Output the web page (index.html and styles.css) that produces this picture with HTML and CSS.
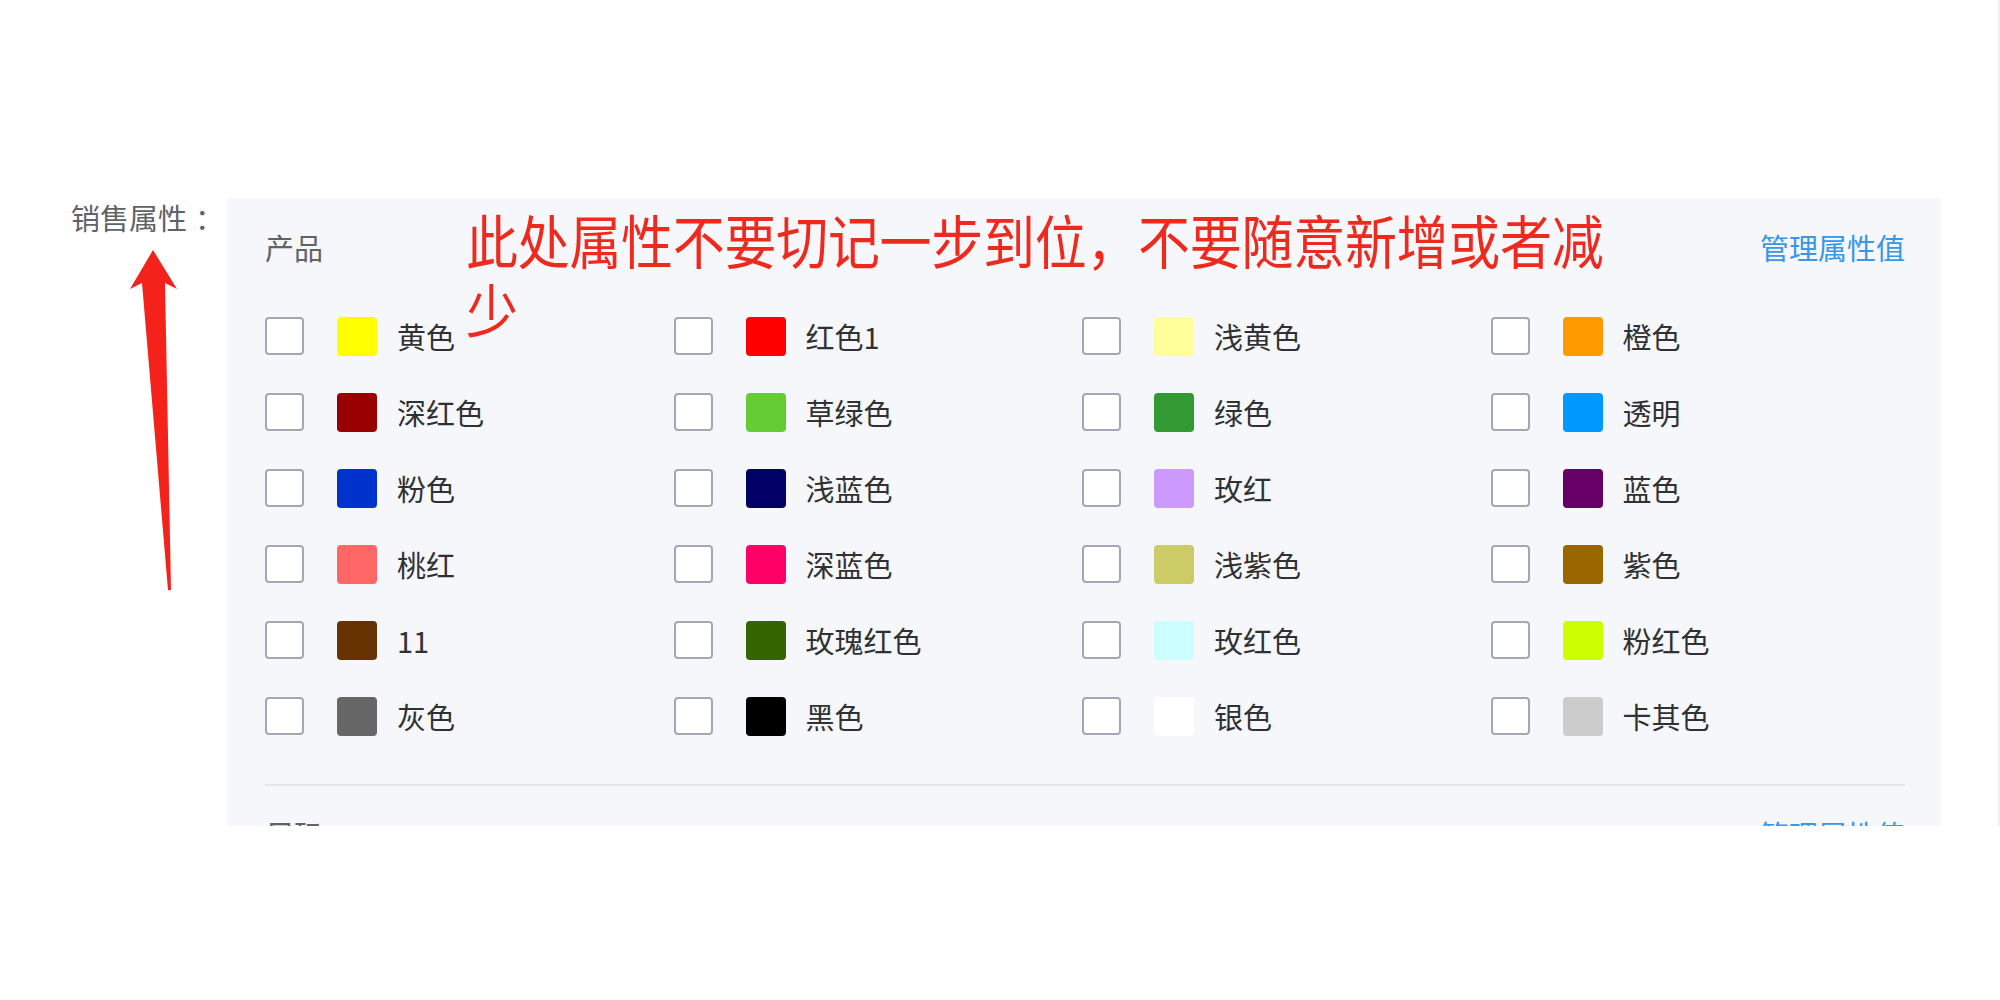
FILE: index.html
```html
<!DOCTYPE html>
<html lang="zh-CN">
<head>
    <meta charset="UTF-8">
    <meta name="viewport" content="width=device-width, initial-scale=1.0">
    <title>销售属性</title>
    <link rel="stylesheet" href="styles.css">
</head>
<body>
    <div class="page">
        <div class="sale-row">
            <div class="sale-label">销售属性<span class="colon">：</span></div>
            <div class="attr-panel">
                <div class="attr-group">
                    <div class="group-head">
                        <span class="group-name">产品</span>
                        <a class="manage-link">管理属性值</a>
                    </div>
                    <div class="value-grid">
                        <label class="value-item"><span class="check"></span><span class="swatch" style="background:#ffff00"></span><span class="value-name">黄色</span></label>
                        <label class="value-item"><span class="check"></span><span class="swatch" style="background:#ff0000"></span><span class="value-name">红色1</span></label>
                        <label class="value-item"><span class="check"></span><span class="swatch" style="background:#ffff99"></span><span class="value-name">浅黄色</span></label>
                        <label class="value-item"><span class="check"></span><span class="swatch" style="background:#ff9900"></span><span class="value-name">橙色</span></label>

                        <label class="value-item"><span class="check"></span><span class="swatch" style="background:#990000"></span><span class="value-name">深红色</span></label>
                        <label class="value-item"><span class="check"></span><span class="swatch" style="background:#66cc33"></span><span class="value-name">草绿色</span></label>
                        <label class="value-item"><span class="check"></span><span class="swatch" style="background:#339933"></span><span class="value-name">绿色</span></label>
                        <label class="value-item"><span class="check"></span><span class="swatch" style="background:#0099ff"></span><span class="value-name">透明</span></label>

                        <label class="value-item"><span class="check"></span><span class="swatch" style="background:#0033cc"></span><span class="value-name">粉色</span></label>
                        <label class="value-item"><span class="check"></span><span class="swatch" style="background:#000066"></span><span class="value-name">浅蓝色</span></label>
                        <label class="value-item"><span class="check"></span><span class="swatch" style="background:#cc99ff"></span><span class="value-name">玫红</span></label>
                        <label class="value-item"><span class="check"></span><span class="swatch" style="background:#660066"></span><span class="value-name">蓝色</span></label>

                        <label class="value-item"><span class="check"></span><span class="swatch" style="background:#ff6666"></span><span class="value-name">桃红</span></label>
                        <label class="value-item"><span class="check"></span><span class="swatch" style="background:#ff0066"></span><span class="value-name">深蓝色</span></label>
                        <label class="value-item"><span class="check"></span><span class="swatch" style="background:#cccc66"></span><span class="value-name">浅紫色</span></label>
                        <label class="value-item"><span class="check"></span><span class="swatch" style="background:#996600"></span><span class="value-name">紫色</span></label>

                        <label class="value-item"><span class="check"></span><span class="swatch" style="background:#663300"></span><span class="value-name">11</span></label>
                        <label class="value-item"><span class="check"></span><span class="swatch" style="background:#336600"></span><span class="value-name">玫瑰红色</span></label>
                        <label class="value-item"><span class="check"></span><span class="swatch" style="background:#ccffff"></span><span class="value-name">玫红色</span></label>
                        <label class="value-item"><span class="check"></span><span class="swatch" style="background:#ccff00"></span><span class="value-name">粉红色</span></label>

                        <label class="value-item"><span class="check"></span><span class="swatch" style="background:#666666"></span><span class="value-name">灰色</span></label>
                        <label class="value-item"><span class="check"></span><span class="swatch" style="background:#000000"></span><span class="value-name">黑色</span></label>
                        <label class="value-item"><span class="check"></span><span class="swatch" style="background:#ffffff"></span><span class="value-name">银色</span></label>
                        <label class="value-item"><span class="check"></span><span class="swatch" style="background:#cccccc"></span><span class="value-name">卡其色</span></label>
                    </div>
                </div>
                <div class="attr-group">
                    <div class="group-head">
                        <span class="group-name">尺码</span>
                        <a class="manage-link">管理属性值</a>
                    </div>
                </div>

                <!-- annotation drawn over the panel -->
                <p class="note">此处属性不要切记一步到位，不要随意新增或者减少</p>
            </div>

            <svg class="arrow" width="200" height="600" viewBox="0 0 200 600">
                <polygon points="153,250 177,289 165,283 171,590 168,590 142,283 130,289" fill="#f5221b"/>
            </svg>
        </div>
    </div>
</body>
</html>
```

FILE: styles.css
```css
:root {
    --panel-bg: #f5f7fa;
    --label-color: #606266;
    --text-color: #303133;
    --link-color: #3a96e6;
    --line-color: #e3e6eb;
    --note-color: #ee2a1f;
}

body {
    margin: 0;
    background-color: #fff;
    font-family: "Noto Sans CJK SC", "Noto Sans", sans-serif;
}

.page {
    width: 1998px;
    height: 826px;
    border-right: 2px solid #eef0f2;
    overflow: hidden;
}

.sale-row {
    position: relative;
    display: flex;
    align-items: flex-start;
    padding-top: 198px;
}

.sale-label {
    width: 216px;
    margin-right: 11px;
    text-align: right;
    font-size: 29px;
    line-height: 38px;
    color: var(--label-color);
    flex-shrink: 0;
}

.colon {
    margin-left: 8px;
    margin-right: -8px;
}

.attr-panel {
    position: relative;
    width: 1714px;
    height: 628px;
    box-sizing: border-box;
    padding: 29px 36px 0 38px;
    background-color: var(--panel-bg);
    overflow: hidden;
}

.attr-group {
    padding-bottom: 49px;
    border-bottom: 2px solid var(--line-color);
}

.attr-group + .attr-group {
    padding-top: 28px;
    border-bottom: none;
}

.group-head {
    display: flex;
    justify-content: space-between;
    align-items: center;
    height: 40px;
    font-size: 29px;
    line-height: 40px;
}

.group-name {
    color: var(--label-color);
}

.manage-link {
    color: var(--link-color);
    cursor: pointer;
}

.value-grid {
    display: grid;
    grid-template-columns: repeat(4, 408.5px);
    row-gap: 38px;
    margin-top: 50px;
}

.value-item {
    display: flex;
    align-items: center;
    height: 38px;
    cursor: pointer;
}

.check {
    width: 39px;
    height: 38px;
    box-sizing: border-box;
    border: 2px solid #a3a9b2;
    border-radius: 4px;
    background-color: #fff;
    margin-right: 33px;
    flex-shrink: 0;
}

.swatch {
    width: 40px;
    height: 39px;
    border-radius: 4px;
    margin-right: 20px;
    flex-shrink: 0;
}

.value-name {
    font-size: 29px;
    color: var(--text-color);
    white-space: nowrap;
}

.note {
    position: absolute;
    left: 239px;
    top: 7px;
    width: 1160px;
    margin: 0;
    font-size: 52px;
    line-height: 61px;
    letter-spacing: -0.3px;
    color: var(--note-color);
    transform: scaleY(1.12);
    transform-origin: top left;
}

.arrow {
    position: absolute;
    left: 0;
    top: 0;
    pointer-events: none;
}
```
